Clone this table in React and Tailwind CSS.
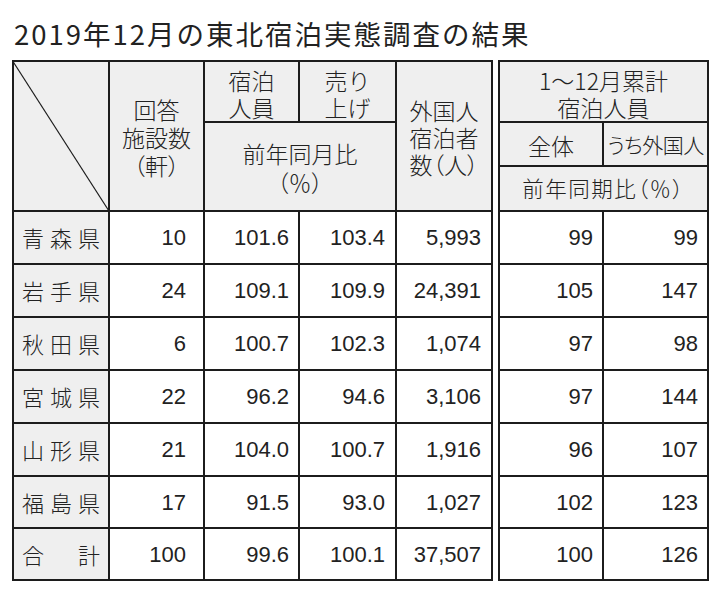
import React from 'react';

const jp = "font-['Noto_Sans_CJK_JP',sans-serif]";
const num = "font-['Liberation_Sans','Noto_Sans_CJK_JP',sans-serif]";

const rows = [
  { name: ['青', '森', '県'], shisetsu: '10', jinin: '101.6', uriage: '103.4', gaikoku: '5,993', zentai: '99', uchi: '99' },
  { name: ['岩', '手', '県'], shisetsu: '24', jinin: '109.1', uriage: '109.9', gaikoku: '24,391', zentai: '105', uchi: '147' },
  { name: ['秋', '田', '県'], shisetsu: '6', jinin: '100.7', uriage: '102.3', gaikoku: '1,074', zentai: '97', uchi: '98' },
  { name: ['宮', '城', '県'], shisetsu: '22', jinin: '96.2', uriage: '94.6', gaikoku: '3,106', zentai: '97', uchi: '144' },
  { name: ['山', '形', '県'], shisetsu: '21', jinin: '104.0', uriage: '100.7', gaikoku: '1,916', zentai: '96', uchi: '107' },
  { name: ['福', '島', '県'], shisetsu: '17', jinin: '91.5', uriage: '93.0', gaikoku: '1,027', zentai: '102', uchi: '123' },
  { name: ['合', '計'], shisetsu: '100', jinin: '99.6', uriage: '100.1', gaikoku: '37,507', zentai: '100', uchi: '126' },
];

// 括弧だけ詰める
const P = ({ children }) => <span className="[font-feature-settings:'palt']">{children}</span>;

// 見出しセル（グレー背景・中央寄せ）
const Head = ({ className = '', children }) => (
  <div className={`bg-[#efefef] flex flex-col items-center justify-center text-center ${className}`}>
    {children}
  </div>
);

const Num = ({ pr, children }) => (
  <div className={`bg-white flex items-center justify-end ${pr} ${num} text-[22px]`}>{children}</div>
);

export default function App() {
  return (
    <div className="w-[717px] h-[596px] bg-white text-[#222] pl-[12px] overflow-hidden">
      <h1 className={`${jp} text-[27.5px] leading-[36px] pt-[15px] pl-[2px] mb-[9px] font-normal tracking-[2px]`}>
        2019年12月の東北宿泊実態調査の結果
      </h1>

      <div className="flex gap-[5px]">
        {/* 左の表 */}
        <div
          className={`grid grid-cols-[94px_93px_93px_95px_94px] grid-rows-[59px_87px_51px_51px_51px_51px_51px_50px_50px] gap-[2px] p-[2px] bg-[#1c1c1c] ${jp} font-light text-[23px]`}
        >
          <div className="relative bg-[#efefef] col-start-1 row-start-1 row-span-2">
            <svg className="absolute -left-[2px] -top-[2px] w-[calc(100%+3px)] h-[calc(100%+3px)]" preserveAspectRatio="none" viewBox="0 0 100 100">
              <line x1="0" y1="0" x2="100" y2="100" stroke="#1c1c1c" strokeWidth="1.2" vectorEffect="non-scaling-stroke" />
            </svg>
          </div>
          <Head className="col-start-2 row-start-1 row-span-2 leading-[28px] pt-[2px]">
            <span>回答</span>
            <span>施設数</span>
            <span><P>（</P>軒<P>）</P></span>
          </Head>
          <Head className="col-start-3 row-start-1 leading-[27px] pt-[5px]">
            <span>宿泊</span>
            <span>人員</span>
          </Head>
          <Head className="col-start-4 row-start-1 leading-[27px] pt-[5px]">
            <span>売り</span>
            <span>上げ</span>
          </Head>
          <Head className="col-start-3 col-span-2 row-start-2 leading-[29px] pt-[2px]">
            <span>前年同月比</span>
            <span><P>（</P>％<P>）</P></span>
          </Head>
          <Head className="col-start-5 row-start-1 row-span-2 leading-[27px] pt-[2px]">
            <span>外国人</span>
            <span>宿泊者</span>
            <span>数<P>（</P>人<P>）</P></span>
          </Head>

          {rows.map((r) => (
            <React.Fragment key={r.name.join('')}>
              <div className="bg-[#efefef] flex items-center justify-between px-[8px] text-[22px]">
                {r.name.map((c) => (
                  <span key={c}>{c}</span>
                ))}
              </div>
              <Num pr="pr-[17px]">{r.shisetsu}</Num>
              <Num pr="pr-[9px]">{r.jinin}</Num>
              <Num pr="pr-[10px]">{r.uriage}</Num>
              <Num pr="pr-[10px]">{r.gaikoku}</Num>
            </React.Fragment>
          ))}
        </div>

        {/* 右の表 */}
        <div
          className={`grid grid-cols-[102px_103px] grid-rows-[59px_42px_43px_51px_51px_51px_51px_51px_50px_50px] gap-[2px] p-[2px] bg-[#1c1c1c] self-start ${jp} font-light text-[23px]`}
        >
          <Head className="col-span-2 leading-[27px] pt-[5px]">
            <span>1～12月累計</span>
            <span>宿泊人員</span>
          </Head>
          <Head className="pt-[2px]">全体</Head>
          <Head className="pt-[2px] text-[21px] tracking-[-0.5px] [font-feature-settings:'palt']">うち外国人</Head>
          <Head className="col-span-2 text-[21.5px]">
            <span className="tracking-[1.5px]">前年同期比<P>（</P>％<P>）</P></span>
          </Head>

          {rows.map((r) => (
            <React.Fragment key={r.name.join('')}>
              <Num pr="pr-[9px]">{r.zentai}</Num>
              <Num pr="pr-[9px]">{r.uchi}</Num>
            </React.Fragment>
          ))}
        </div>
      </div>
    </div>
  );
}
